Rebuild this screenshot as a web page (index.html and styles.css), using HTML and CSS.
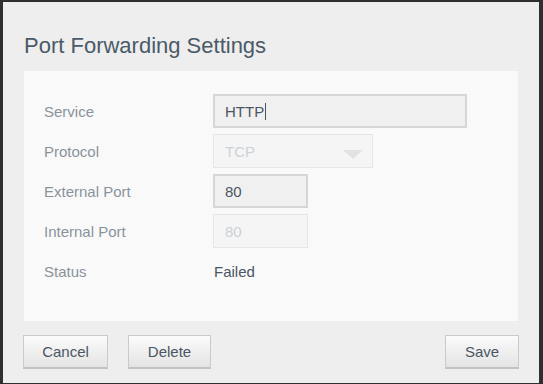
FILE: index.html
```html
<!DOCTYPE html>
<html lang="en">
<head>
    <meta charset="UTF-8">
    <meta name="viewport" content="width=device-width, initial-scale=1.0">
    <title>Port Forwarding Settings</title>
    <link rel="stylesheet" href="styles.css">
</head>
<body>

<!-- dialog -->
<div class="dialog">
    <h2 class="title">Port Forwarding Settings</h2>

    <div class="panel">
        <div class="row">
            <div class="label">Service</div>
            <div class="field field-wide">HTTP<span class="caret"></span></div>
        </div>
        <div class="row">
            <div class="label">Protocol</div>
            <div class="field field-select disabled">
                <span>TCP</span>
                <span class="arrow"></span>
            </div>
        </div>
        <div class="row">
            <div class="label">External Port</div>
            <div class="field field-small">80</div>
        </div>
        <div class="row">
            <div class="label">Internal Port</div>
            <div class="field field-small disabled">80</div>
        </div>
        <div class="row">
            <div class="label">Status</div>
            <div class="value">Failed</div>
        </div>
    </div>

    <div class="footer">
        <button class="btn btn-cancel">Cancel</button>
        <button class="btn btn-delete">Delete</button>
        <div class="spacer"></div>
        <button class="btn btn-save">Save</button>
    </div>
</div>

</body>
</html>
```

FILE: styles.css
```css
body, html {
    margin: 0;
    padding: 0;
    height: 100%;
}

body {
    background-color: #2f2f2f;
    font-family: "Liberation Sans", Arial, sans-serif;
    overflow: hidden;
}

.dialog {
    margin: 2px 4px 0 3px;
    height: 381px;
    background-color: #edeeed;
    padding: 31px 21px 0 21px;
    box-sizing: border-box;
}

.title {
    margin: 0 0 12px 0;
    font-size: 22px;
    line-height: 26px;
    font-weight: normal;
    color: #4b5a68;
}

/* white panel with form rows */
.panel {
    background-color: #f9f9f9;
    padding: 23px 20px 33px 20px;
    display: flex;
    flex-direction: column;
    gap: 6px;
}

.row {
    display: flex;
    align-items: center;
    height: 34px;
}

.label {
    width: 169px;
    font-size: 15px;
    color: #8a939b;
}

.value {
    font-size: 15px;
    color: #4a5663;
    padding-left: 1px;
}

.field {
    box-sizing: border-box;
    height: 34px;
    border: 2px solid #d6d6d6;
    background-color: #f0f0f0;
    padding: 0 10px;
    font-size: 15px;
    color: #4a5663;
    display: flex;
    align-items: center;
}

.field-wide {
    width: 254px;
}

.field-small {
    width: 95px;
}

.field-select {
    width: 160px;
    justify-content: space-between;
    padding-right: 9px;
}

.field.disabled {
    border: 1px solid #e6e6e6;
    background-color: #f5f5f5;
    color: #ccd2d8;
    padding-left: 11px;
}

.caret {
    display: inline-block;
    width: 1px;
    height: 17px;
    background-color: #4a5663;
    margin-left: 1px;
}

.arrow {
    width: 0;
    height: 0;
    border-left: 10px solid transparent;
    border-right: 10px solid transparent;
    border-top: 9px solid #e2e2e2;
    margin-top: 6px;
}

.footer {
    display: flex;
    gap: 20px;
    margin: 14px -1px 0 -1px;
}

.spacer {
    flex: 1;
}

.btn {
    height: 34px;
    box-sizing: border-box;
    border: 1px solid #cacaca;
    border-bottom: 2px solid #c2c2c2;
    background: linear-gradient(#fbfbfb, #e4e4e4);
    font-family: "Liberation Sans", Arial, sans-serif;
    font-size: 15px;
    color: #4a5663;
    padding: 0;
    cursor: pointer;
}

.btn-cancel {
    width: 85px;
}

.btn-delete {
    width: 83px;
}

.btn-save {
    width: 74px;
}
```
